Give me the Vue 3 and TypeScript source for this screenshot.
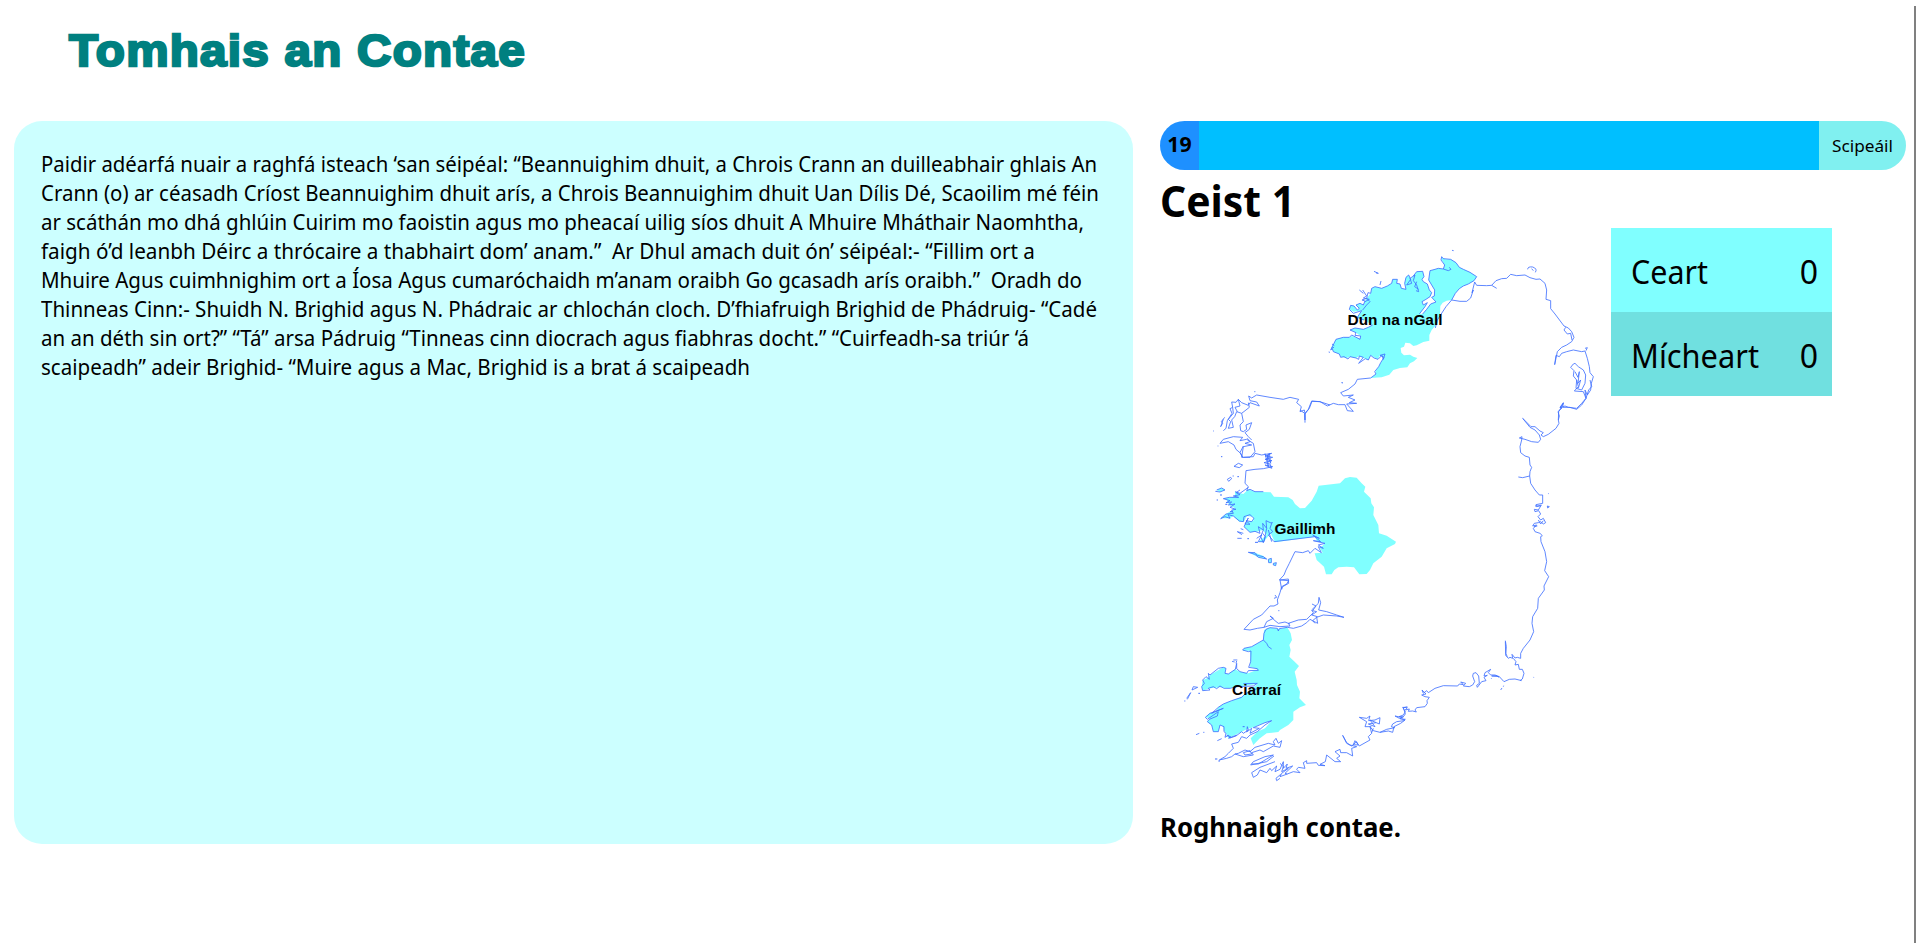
<script setup lang="ts">
import { ref } from 'vue'

interface Line { text: string; width: number }
interface Score { label: string; width: number; value: number; wrong: boolean }

const passage: Line[] = [
  { text: 'Paidir adéarfá nuair a raghfá isteach ‘san séipéal: “Beannuighim dhuit, a Chrois Crann an duilleabhair ghlais An', width: 1056 },
  { text: 'Crann (o) ar céasadh Críost Beannuighim dhuit arís, a Chrois Beannuighim dhuit Uan Dílis Dé, Scaoilim mé féin', width: 1058 },
  { text: 'ar scáthán mo dhá ghlúin Cuirim mo faoistin agus mo pheacaí uilig síos dhuit A Mhuire Mháthair Naomhtha,', width: 1043 },
  { text: 'faigh ó’d leanbh Déirc a thrócaire a thabhairt dom’ anam.”  Ar Dhul amach duit ón’ séipéal:- “Fillim ort a', width: 994 },
  { text: 'Mhuire Agus cuimhnighim ort a Íosa Agus cumaróchaidh m’anam oraibh Go gcasadh arís oraibh.”  Oradh do', width: 1041 },
  { text: 'Thinneas Cinn:- Shuidh N. Brighid agus N. Phádraic ar chlochán cloch. D’fhiafruigh Brighid de Phádruig- “Cadé', width: 1056 },
  { text: 'an an déth sin ort?” “Tá” arsa Pádruig “Tinneas cinn diocrach agus fiabhras docht.” “Cuirfeadh-sa triúr ‘á', width: 988 },
  { text: 'scaipeadh” adeir Brighid- “Muire agus a Mac, Brighid is a brat á scaipeadh', width: 709 },
]

const scores = ref<Score[]>([
  { label: 'Ceart', width: 77, value: 0, wrong: false },
  { label: 'Mícheart', width: 128, value: 0, wrong: true },
])
const seconds = ref(19)

// Stretches or condenses a text run to the given width in pixels.
const vFit = {
  mounted(el: HTMLElement, binding: { value: number }) {
    const natural = el.getBoundingClientRect().width
    if (natural > 0) el.style.transform = `scaleX(${binding.value / natural})`
  },
}
</script>

<template>
  <main class="page">
    <h1 class="title"><span v-fit="457" class="fit">Tomhais an Contae</span></h1>
    <div class="columns">
      <section class="passage">
        <div v-for="(line, i) in passage" :key="i" class="line"><span v-fit="line.width" class="fit">{{ line.text }}</span></div>
      </section>
      <section class="quiz">
        <div class="timer">
          <div class="seconds">{{ seconds }}</div>
          <div class="track"></div>
          <button class="skip"><span v-fit="61" class="fit">Scipeáil</span></button>
        </div>
        <h2 class="question"><span v-fit="135" class="fit">Ceist 1</span></h2>
        <div class="board">
          <svg class="map" viewBox="1160 228 451 572" width="451" height="572">
            <!-- Dún na nGall and the north coast -->
            <g transform="translate(1300 240) scale(.33333)">
              <path class="county" d="M425 52L436 58L452 58L468 68L478 82L490 88L510 97L530 110L522 122L505 132L490 138L478 146L466 160L455 180L440 182L428 188L421 198L420 222L413 250L395 270L388 285L388 302L370 306L350 316L340 318L330 310L316 308L312 320L302 324L304 338L312 346L330 344L340 350L352 354L342 364L330 370L322 382L300 384L280 390L268 404L245 412L212 414L228 402L226 395L236 380L242 368L252 352L240 346L234 358L222 352L212 346L205 360L196 356L186 352L178 348L168 354L150 350L140 354L122 350L118 342L100 335L94 322L102 310L108 298L130 292L148 292L155 288L180 296L182 288L168 278L150 270L165 264L190 268L205 262L218 255L192 240L172 232L185 212L160 215L148 208L152 196L162 198L172 210L178 205L168 195L180 190L190 195L195 183L200 175L212 160L215 145L225 140L245 145L262 138L275 130L278 118L292 118L290 130L300 132L304 145L318 148L314 130L318 112L326 105L332 118L340 108L350 95L368 94L372 110L366 118L370 125L382 132L388 150L395 158L390 170L378 178L366 185L370 195L382 188L375 200L358 222L368 222L380 208L392 192L408 186L395 172L403 168L404 150L395 135L386 120L390 92L405 88L415 85L430 87L434 75L425 60Z" />
              <path class="coast" d="M212 414L228 402L224 395L236 380L242 368L252 352L240 346L255 342L250 358L246 346L234 358L222 354L212 346L205 360L196 356L176 370L190 352L178 348L176 358L168 354L150 350L144 357L132 350L122 352L118 342L100 335L97 326L92 330L98 318L102 310L108 298L130 292L148 292L155 285L180 298L182 288L165 286L168 278L150 270L165 264L190 268L205 262L218 255M192 240L172 232L185 212L160 220L148 208L152 196L162 198L172 210L178 205L168 195L180 190L190 195L195 183L186 180L200 175L210 185L200 195L188 210M200 175L204 158L212 160L215 145L225 140L245 145L262 138L275 130L278 118L292 118L290 130L300 132L304 145L318 148L314 130L318 112L326 105L332 118L320 135L335 130L330 115L345 105L340 122L350 135L356 155L348 152M340 108L350 95L368 94L372 110L366 118L370 125L382 132L388 150L395 158L390 170L378 178L366 185L370 195L382 188L375 200L358 222M368 222L380 208L392 192L408 186L395 172L403 168L404 150L395 135L386 120L390 92L405 88L415 85L430 87L434 75L423 60L425 50L430 56L452 58L468 68L478 82L490 88L510 97L530 110L522 122L505 132L490 138L478 146L466 160L455 180M430 87L445 92L453 88L448 82M406 264L412 240L438 200L455 180L480 184L500 184L512 174L520 150L516 158L524 126L530 136L560 137L575 136L590 145M575 136L588 122L605 116L620 115L632 103L650 107L675 105L690 113L708 118L720 117L735 130L740 150L738 178L752 182L752 206L765 222L792 258L805 264L815 275L822 292L815 305L800 315L785 322L772 335L768 355L764 374L768 346L778 350L785 340L800 335L820 330L845 335L855 333L862 355L868 380L870 398L880 410L874 430L872 450L862 465L855 450L858 475L845 490L830 505L805 502L795 498L780 504L790 490L782 505L776 515L775 540M797 262L792 270L802 282L812 280L816 300M820 372L812 382L822 392L820 408L830 420L828 445L845 450L855 430L857 405L850 390L835 380L825 370ZM825 395L834 412L838 395L834 430L842 420L835 445M855 325L862 323L858 332M222 94L235 100L228 99M240 135L243 123M683 88Q683 79 698 81Q713 86 706 97M695 86L700 92M456 31L461 32M125 428L128 429M86 336L90 337M212 414L172 418L165 432L145 448L122 458L130 468L160 465L145 472L165 480L148 488L170 490L140 492L160 514L142 512L135 494L115 494L100 490L82 498L60 485L36 484L28 505L15 522L15 540L14 520L0 510M94 325L102 322M96 312L103 317M178 150L190 160M188 150L200 168L190 174L208 178L195 185M350 125L344 140L356 148" />
            </g>
            <!-- Gaillimh and the west coast -->
            <g transform="translate(1200 370) scale(.33333)">
              <path class="county" d="M105 365L130 372L145 358L165 365L212 367L222 380L265 382L278 390L285 402L300 415L315 414L335 392L350 365L356 347L420 340L435 325L450 321L470 323L485 340L496 350L492 365L512 385L514 400L522 412L520 435L535 465L537 490L560 497L588 515L585 522L560 535L545 560L520 580L510 600L500 612L478 613L462 592L440 590L415 592L403 600L395 613L378 613L372 590L350 570L344 550L368 548L360 535L375 520L350 512L345 500L225 517L212 490L190 517L175 515L200 495L188 480L170 485L150 487L132 470L140 455L160 452L160 440L140 438L132 455L118 455L100 438L90 445L62 445L78 432L105 415L88 405L80 390L70 385L105 380ZM145 547L165 548L190 558L200 568L175 562ZM205 568L214 565L214 578L206 578ZM220 580L229 578L227 587L220 585ZM50 360L65 354L75 360L60 366Z" />
              <path class="coast" d="M315 158L315 130L325 118L335 93L360 95L390 105M315 130L313 120L300 125L304 110L290 98L296 88L270 82L250 88L210 82L170 75L155 84L146 78L150 92L170 96L178 108L150 98L145 106L125 98L115 88L108 97L95 96L98 112L90 116L96 130L82 152L78 175L70 182M98 112L100 130L85 148L92 155L85 175L100 172L95 150L104 140L110 125L125 130L138 120L148 112L145 98M115 88L120 108L105 112L112 125M125 130L130 155L120 165L122 182L130 185L140 178L138 165L155 158L148 178L135 188L145 200L155 210M70 148L62 170L68 160L64 155L74 142M60 220L70 208L100 200L128 202L120 212L140 208L160 220L165 245L150 262L125 262L130 230L155 225L135 220L150 215L142 205M60 220L85 215L102 225L108 238L122 250L128 262L120 248L130 228M130 262L160 260L165 250L185 255L215 250L195 258L218 262L195 268L216 272L192 278L210 282L215 295L195 285L218 290L190 296L165 298L138 302L135 340L145 350L140 362L150 358L165 365L190 365M195 250L205 290L202 255L212 280L208 250L200 270M102 289L115 280L128 285L118 293ZM82 328L92 322L95 326L86 334ZM50 360L65 354L75 360L60 366L46 364M105 365L120 370L145 352M120 360L108 368L120 374L100 378L116 382L88 382L70 386L90 392L78 398L95 396L85 405L105 402L90 412L108 418L95 420L100 430L78 432L62 446L75 440L90 445L84 434L100 438L118 453L130 455L132 440L150 434L162 445L155 455L138 452L150 463L135 462L145 444L132 470L150 487L165 484L180 490L175 470L190 480L188 460L200 475L198 452L215 460L210 475L218 485L205 495L222 515L345 500L358 505L338 495L362 515L340 512L375 520L355 525L370 535L355 530L364 548L345 535L330 550L325 542L308 548L285 545L268 580L258 600L252 615L238 630L265 627L266 640L248 650L245 658M190 480L182 500L190 518L196 500L188 490M200 475L192 515L175 515L185 495L170 505M205 480L215 515M130 490L112 485L126 494M122 476L130 479M112 505L125 505M145 547L165 548L172 556L190 560L200 567L175 562L165 553ZM220 580L229 578L227 587L220 585ZM205 568L214 565L214 578L206 578Z" />
              <path class="coast specks" d="M425 38h3M40 183h2M63 260h4M50 390h4M60 375h6M163 65h3M142 506h5M98 318h3M112 320h5M165 517h9M90 425h8M76 403h6M214 458h4M53 228h2" />
            </g>
            <!-- Ciarraí and the south-west -->
            <g transform="translate(1170 580) scale(.33333)">
              <path class="county" d="M282 150L300 143L330 147L352 142L362 160L366 180L358 195L362 210L358 230L374 245L387 258L374 275L380 300L381 315L390 335L388 355L408 375L390 382L370 395L370 420L355 435L330 450L325 456L290 460L268 476L250 495L242 475L262 455L285 445L305 422L280 430L250 442L232 447L215 455L175 475L168 460L162 452L160 440L150 435L145 455L130 455L125 435L112 425L120 415L106 412L120 398L135 398L145 382L160 372L185 362L215 350L262 312L200 320L175 325L150 322L120 325L98 332L95 320L98 300L112 295L120 285L160 262L168 265L165 280L175 282L195 268L210 275L235 280L265 268L240 260L242 235L240 212L218 212L222 205L245 200L280 180Z" />
              <path class="coast" d="M335 28L330 0L356 2L350 12L335 20L330 38L322 60L324 72L312 78L300 78L275 105L250 118L222 148L240 150L262 145L282 142L300 136L330 140L360 138L355 130L385 120L410 118L430 98L425 90L445 70L447 52L452 68L446 90L470 95L500 105L522 112L500 108L460 105L440 112L443 130L420 118L410 128L395 138L370 145L352 142M282 142L290 125L310 115L300 108L315 122L325 130L345 126L360 132M426 72L438 78L428 92L440 95L425 105L442 110L428 122L435 130M352 142L328 146L325 153L322 145L300 143L288 148L282 160L280 180L245 200L222 205L218 210L235 215L243 213L242 245L236 262L262 266L265 271L235 272L230 280L210 275L200 266L200 250L196 268L175 282L165 280L168 265L160 262L145 265L120 285L115 280L118 298L108 290L98 300L103 310L95 320L98 332L120 330L115 325L130 320L140 326L150 318L162 325L180 325L200 320L250 318L262 310L220 311M280 180L290 190L295 200L305 207M270 322L225 342L215 352L185 362L160 372L145 382L125 400L160 385L120 400L106 412L112 418L145 395L142 408L118 418L112 425L125 435L130 455L145 455L150 435L162 440L162 455L168 460L165 472L175 466L180 474L198 468L215 455L220 460L235 450L232 440L230 456L245 445L240 460L268 445L250 443L285 428L305 422L285 435L262 455L240 465L230 475L215 470L205 487L185 492L190 505L175 520L165 530L148 540L170 535L185 530L195 522L220 530L250 525L245 518L270 510L280 515L310 498L330 502L335 482L325 490L318 475L310 485L315 495L295 490L255 502L240 515L225 510L205 520L195 522M220 518L240 512L245 522L225 525ZM245 552L265 552L310 525L285 530L250 545L242 555L290 545L312 528M315 545L270 562L245 578L250 592L262 585L270 570L290 578L300 565L305 572L320 558L315 575L330 568L340 545L340 565L352 552L348 565L368 558L345 580L352 582L330 590L335 580L355 565L335 575L340 560L330 550M352 582L370 575L390 578L380 568L385 562L405 565L400 548L410 542L410 550L440 548L445 556L465 557L450 553L466 545L470 525L495 545L512 545L500 535L510 528L495 515L510 508L512 518L530 518L548 528L545 505L560 500L540 495L530 488L518 466L530 490L545 498L560 485L565 495L550 494L555 482L568 498L600 480L595 470L605 460L600 440L610 452L630 457M604 440L585 440L590 425L568 412L590 415L600 408L596 422L615 420L630 413L628 432L600 420L615 440L595 432L618 428M630 457L655 453L668 457L672 440L692 430L705 420L688 415L675 408L698 413L706 402L700 383L712 380M332 583L318 595L320 602L330 595M190 240L202 240M186 244L194 246M198 250L200 243M70 320L83 322L66 330ZM50 355L62 338L52 358M78 464L88 460M142 482L155 476M315 45L320 52L312 55M605 458L610 445M170 466L182 470L176 475L200 465" />
              <path class="coast specks" d="M43 363h3M85 340h5M100 457h3M135 537h7M145 543h5M218 440h6M325 92h3" />
            </g>
            <!-- South-east coast -->
            <g transform="translate(1380 640) scale(.33333)">
              <path class="coast" d="M425 122L405 117L388 118L372 125L358 110L335 108L350 107L356 112M358 110L345 105L332 105L325 98L332 88L315 98L312 108L322 106L312 112L318 122L305 125L292 142L290 136L298 130L296 108L288 98L280 100L278 108L284 125L278 135L268 140L250 138L257 130L242 126L250 134L238 132L233 138L190 137L165 145L145 158L140 152L130 160L126 150L138 162L125 165L135 170L148 172L141 182L142 190L135 200L110 203L105 210L109 216L98 213L85 214L88 207L76 210L82 203L68 202L76 215L70 225L57 230L68 230L60 236L76 238L72 242L50 245L38 252L34 260L44 263L20 268L0 277M362 150L366 144M370 140L371 137M460 112L461 112M334 116L335 114" />
            </g>
            <!-- East coast -->
            <g transform="translate(1480 380) scale(.33333)">
              <path class="coast" d="M235 120L238 108L234 95L246 84L240 82L250 68L248 82L270 82L290 88L305 75L318 55L310 35L283 33L295 20L290 0M235 120L237 130L228 145L205 163L190 170L183 165L190 158L180 153L165 140L153 140L145 132L128 115L150 142L165 150L178 165L182 178L175 187L155 185L135 178L118 174L126 170L125 180L120 200L122 218L135 228L148 232L150 255L155 262L150 275L149 288L128 293L115 291M149 288L152 310L165 330L178 345L188 345L188 370L168 374L170 380L184 375L175 390L163 388L165 395L176 392L182 402L174 410L182 420L190 415L197 428L190 432L182 425L175 428L163 430L158 438L170 435L160 445L165 455L180 460L187 467L182 470L183 485L195 515L200 545L194 572L206 590L192 618L193 630L175 655L173 685L158 710L156 730L161 755L150 780L130 805L122 820L122 835L112 832L105 834L96 823L98 835L90 832L85 835L77 826L79 800L76 782M76 785L77 820L82 830M100 835L108 845L105 855L115 853L118 868L127 868L132 880L127 897L120 902M202 378L208 380L203 384ZM204 340L206 341M160 891L161 892M162 440L172 438M175 420L182 432L190 422M165 378L182 378M318 55L326 30L335 20L330 0" />
            </g>
            <text class="county-name" x="1347.5" y="325" textLength="95">Dún na nGall</text>
            <text class="county-name" x="1274.5" y="534" textLength="61">Gaillimh</text>
            <text class="county-name" x="1232" y="695" textLength="49">Ciarraí</text>
          </svg>
          <div class="scores">
            <div v-for="s in scores" :key="s.label" class="score" :class="{ wrong: s.wrong }">
              <span v-fit="s.width" class="fit">{{ s.label }}</span><span>{{ s.value }}</span>
            </div>
          </div>
        </div>
        <p class="prompt"><span v-fit="241" class="fit">Roghnaigh contae.</span></p>
      </section>
    </div>
  </main>
</template>

<style>
body { margin: 0; background: #fff; overflow: hidden; }
</style>

<style scoped>
.page {
  box-sizing: border-box;
  position: relative;
  width: 1920px;
  height: 943px;
  overflow: hidden;
  font-family: 'Noto Sans', 'Open Sans', sans-serif;
  color: #000;
}
.page::after {
  content: '';
  position: absolute;
  top: 6px;
  right: 4px;
  bottom: 0;
  width: 2px;
  background: #808080;
}
.fit { display: inline-block; white-space: pre; transform-origin: 0 50%; }
.title {
  margin: 0;
  height: 121px;
  box-sizing: border-box;
  padding: 21px 0 0 69px;
  font: 700 44.5px/60px 'Liberation Sans', Arial, sans-serif;
  letter-spacing: 1.2px;
  color: #008080;
  -webkit-text-stroke: 2.4px #008080;
}
.columns { display: flex; gap: 27px; padding-left: 14px; }
.passage {
  box-sizing: border-box;
  width: 1119px;
  height: 723px;
  padding: 28px 0 0 26.7px;
  border-radius: 28px;
  background: #ccffff;
  font-size: 21.5px;
  line-height: 29px;
}
.line { height: 29px; white-space: nowrap; }
.quiz { width: 746px; }
.timer { display: flex; height: 49px; border-radius: 25px; overflow: hidden; }
.seconds {
  width: 39px;
  background: #1e90ff;
  font-size: 21.3px;
  font-weight: 700;
  line-height: 46px;
  text-align: center;
}
.track { flex: 1; background: #00bfff; }
.skip {
  width: 87px;
  padding: 0 0 0 13px;
  border: 0;
  background: #80f0f0;
  color: #000;
  font: 17px/50px 'Noto Sans', sans-serif;
  text-align: left;
}
.question { margin: 0; height: 58px; font-size: 42.5px; line-height: 62px; }
.board { display: flex; align-items: flex-start; }
.map { display: block; flex: none; }
.county { fill: #80ffff; }
.coast { fill: none; stroke: #4070ff; stroke-width: 2.5; stroke-linejoin: round; }
.specks { stroke-width: 3; }
.county-name { font: 700 15.4px 'Liberation Sans', Arial, sans-serif; fill: #000; }
.scores { width: 221px; font-size: 32px; }
.score {
  display: flex;
  justify-content: space-between;
  box-sizing: border-box;
  height: 84px;
  padding: 0 14px 0 19.5px;
  background: #80ffff;
  line-height: 87px;
}
.score.wrong { background: #70e0e0; }
.prompt { margin: 0; font-size: 26.5px; font-weight: 700; line-height: 54px; }
</style>
